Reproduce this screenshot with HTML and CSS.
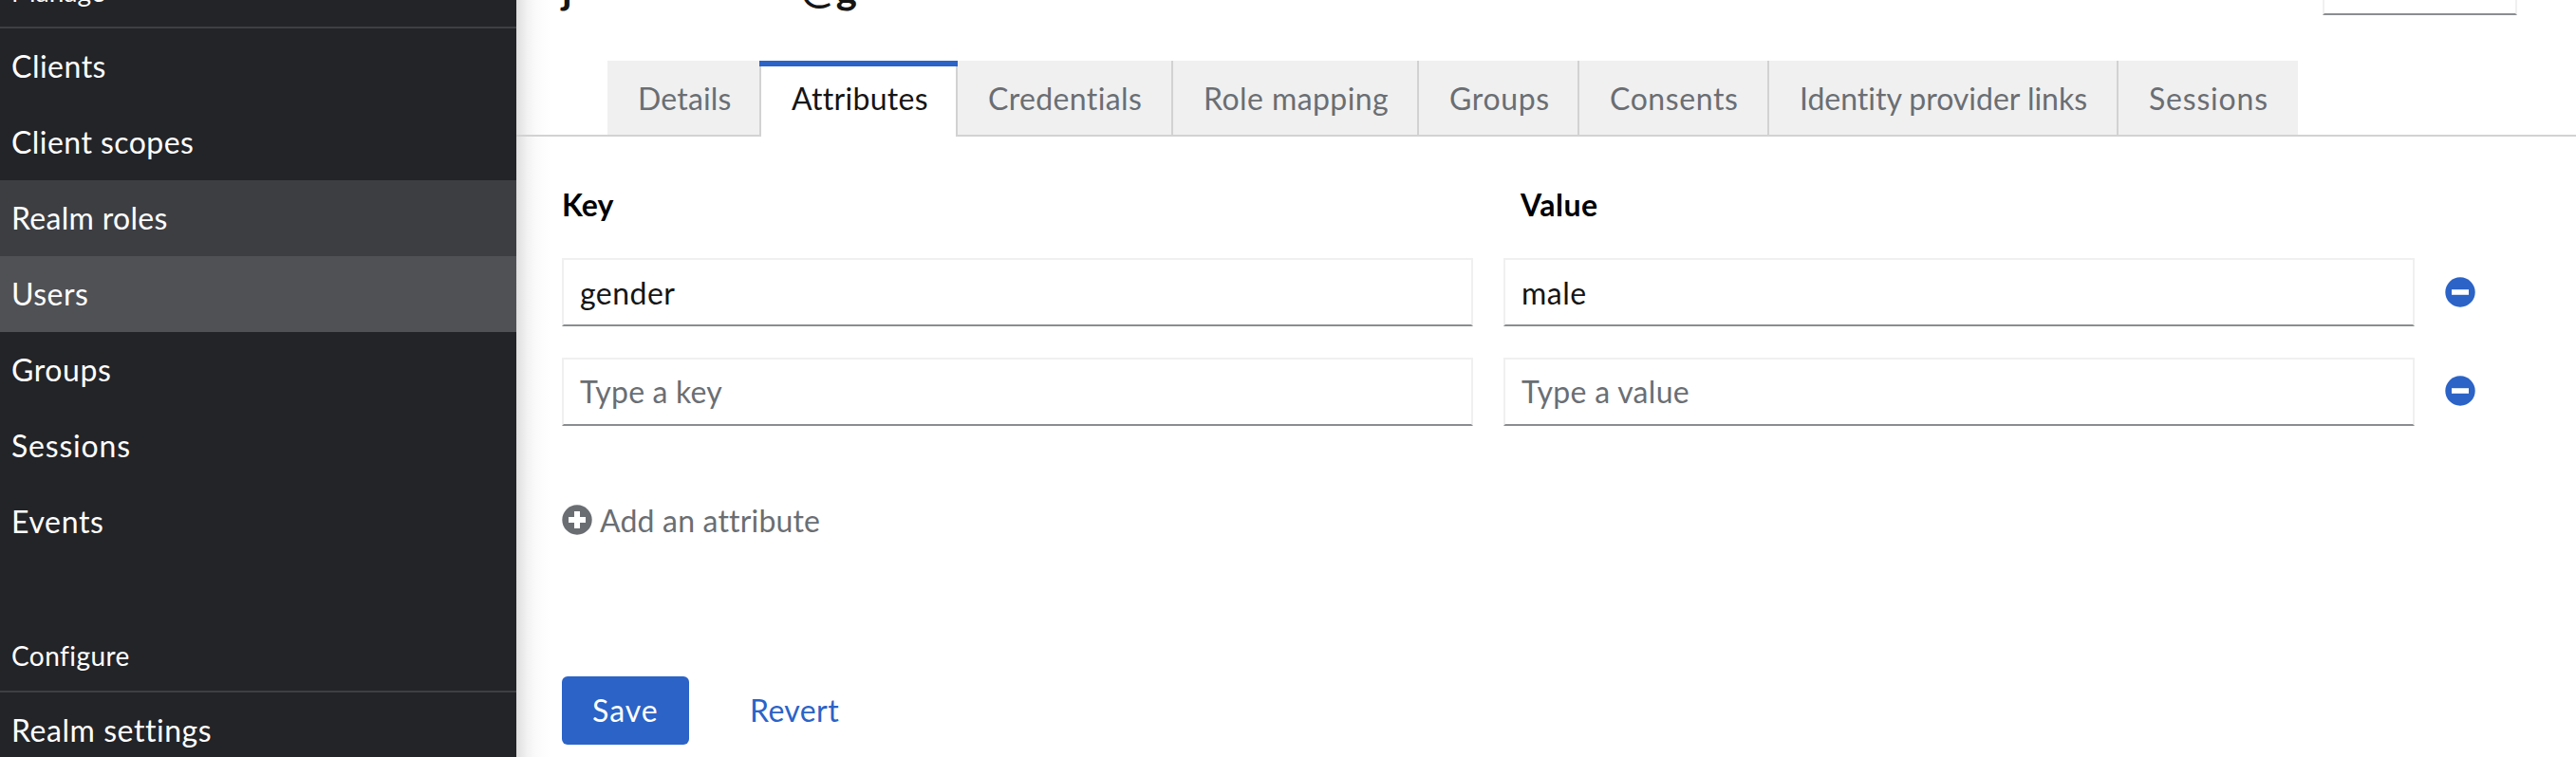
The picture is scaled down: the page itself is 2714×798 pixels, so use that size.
FILE: index.html
```html
<!DOCTYPE html>
<html lang="en">
<head>
<meta charset="utf-8">
<title>User details</title>
<link rel="stylesheet" href="styles.css">
</head>
<body>
<div class="page">
  <aside class="sidebar">
    <h2 class="nav-title nav-title-top t-manage">Manage</h2>
    <nav class="nav-list">
      <a class="nav-item t-clients">Clients</a>
      <a class="nav-item t-scopes">Client scopes</a>
      <a class="nav-item nav-hover t-roles">Realm roles</a>
      <a class="nav-item nav-current t-users">Users</a>
      <a class="nav-item t-groups">Groups</a>
      <a class="nav-item t-sessions">Sessions</a>
      <a class="nav-item t-events">Events</a>
    </nav>
    <h2 class="nav-title nav-title-configure t-configure">Configure</h2>
    <nav class="nav-list">
      <a class="nav-item t-settings">Realm settings</a>
    </nav>
  </aside>
  <main class="main">
    <header class="header">
      <h1 class="username"><span>j</span><span class="domain">@g</span></h1>
      <div class="action-select"></div>
    </header>
    <div class="tabs">
      <button class="tab tab-details">Details</button>
      <button class="tab tab-attributes tab-active">Attributes</button>
      <button class="tab tab-credentials">Credentials</button>
      <button class="tab tab-roles">Role mapping</button>
      <button class="tab tab-groups">Groups</button>
      <button class="tab tab-consents">Consents</button>
      <button class="tab tab-idp">Identity provider links</button>
      <button class="tab tab-sessions">Sessions</button>
    </div>
    <form class="form">
      <div class="labels">
        <span class="label-key">Key</span>
        <span class="label-value">Value</span>
      </div>
      <div class="row">
        <div class="field t-gender">gender</div>
        <div class="field t-male">male</div>
        <svg class="icon" viewBox="0 0 32 32"><circle cx="16" cy="16" r="15.7"/><path class="mark" d="M7 13.2h18v5.6H7z"/></svg>
      </div>
      <div class="row">
        <div class="field placeholder t-typekey">Type a key</div>
        <div class="field placeholder t-typevalue">Type a value</div>
        <svg class="icon icon-second" viewBox="0 0 32 32"><circle cx="16" cy="16" r="15.7"/><path class="mark" d="M7 13.2h18v5.6H7z"/></svg>
      </div>
      <div class="add">
        <svg class="icon" viewBox="0 0 32 32"><circle cx="16" cy="16" r="15.7"/><path class="mark" d="M13 7h6v6h6v6h-6v6h-6v-6H7v-6h6z"/></svg>
        <span class="t-add">Add an attribute</span>
      </div>
      <div class="actions">
        <span class="save">Save</span>
        <span class="revert">Revert</span>
      </div>
    </form>
  </main>
</div>
</body>
</html>
```
FILE: styles.css
```css
* { box-sizing: border-box; }
body { margin: 0; background: #fff; font: 32px/1.5 Lato, sans-serif; font-variant-ligatures: none; color: #151515; }
.page { display: flex; width: 100%; height: 798px; overflow: hidden; }

.sidebar { width: 544px; height: 798px; flex: none; overflow: hidden; background: #232428; color: #fff; }
.nav-title { margin: 0; padding-left: 12px; font-size: 28px; font-weight: 400; border-bottom: 2px solid #3e3f43; }
.nav-title-top { height: 30px; line-height: 42px; display: flex; align-items: flex-end; padding-bottom: 16px; }
.nav-title-configure { height: 140px; line-height: 42px; padding-top: 80px; }
.nav-list { display: flex; flex-direction: column; }
.nav-item { height: 80px; line-height: 80px; padding-left: 12px; }
.nav-hover { background: #3d3e42; }
.nav-current { background: #505155; }

.main { flex: 1; min-width: 0; background: linear-gradient(90deg, #dedede 0, #e9e9e9 6px, #f3f3f3 12px, #fafafa 20px, #fdfdfd 28px, #fff 36px); }
.header { height: 64px; padding: 0 62px 0 48px; display: flex; justify-content: space-between; align-items: flex-start; }
.username { display: flex; width: 313px; height: 16px; margin: 0; justify-content: space-between; align-items: flex-end; padding-bottom: 6px; font-size: 42px; line-height: 44px; font-weight: 700; }
.domain { letter-spacing: 2px; }
.action-select { width: 205px; height: 16px; border: solid #f0f0f0; border-width: 0 2px 2px; border-bottom-color: #8a8d90; }

.tabs { display: flex; height: 80px; padding-left: 96px; border-bottom: 2px solid #d2d2d2; }
.tab { height: 78px; flex: none; padding: 1px 0 0 32px; border: 0 solid #d2d2d2; border-right-width: 2px; background: #f0f0f0; color: #6a6e73; font: 32px/77px Lato, sans-serif; font-variant-ligatures: none; text-align: left; white-space: nowrap; }
.tab-details { width: 162px; height: 80px; border-bottom-width: 2px; letter-spacing: .17px; }
.tab-active { position: relative; height: 80px; background: #fff; color: #151515; padding-bottom: 2px; }
.tab-active::before { content: ""; position: absolute; top: 0; left: -2px; right: -2px; height: 6px; background: #2b63c7; }
.tab-attributes { width: 207px; letter-spacing: .3px; }
.tab-credentials { width: 227px; letter-spacing: .37px; }
.tab-roles { width: 259px; letter-spacing: .42px; }
.tab-groups { width: 169px; letter-spacing: .65px; }
.tab-consents { width: 200px; letter-spacing: .58px; }
.tab-idp { width: 368px; letter-spacing: -.02px; }
.tab-sessions { width: 189px; border-right: 0; letter-spacing: .81px; }

.form { padding: 48px 0 0 48px; }
.labels { display: grid; grid-template-columns: 1010px 1fr; height: 80px; line-height: 47px; font-weight: 700; color: #000; }
.label-value { letter-spacing: .5px; }
.row { display: grid; grid-template-columns: 960px 960px 32px; gap: 32px; height: 72px; margin-bottom: 33px; }
.field { height: 72px; border: 2px solid #f0f0f0; border-bottom-color: #8a8d90; padding-left: 17px; line-height: 69px; background: #fff; }
.placeholder { color: #6a6e73; line-height: 67px; }
.icon { display: block; width: 32px; height: 32px; margin-top: 20px; fill: #2b63c7; }
.icon-second { margin-top: 19px; }
.icon .mark { fill: #fff; }

.add { display: flex; height: 48px; margin-top: 75px; line-height: 49px; color: #6a6e73; }
.add .icon { margin: 8px 8px 0 0; fill: #6a6e73; }
.actions { display: flex; margin-top: 141px; height: 72px; line-height: 71px; }
.save { width: 134px; padding-left: 32px; border-radius: 6px; background: #2b63c7; color: #fff; letter-spacing: 1px; }
.revert { padding-left: 64px; color: #2b63c7; letter-spacing: .4px; }

/* per-string tracking */
.t-manage { letter-spacing: .13px; }
.t-clients { letter-spacing: .5px; }
.t-scopes { letter-spacing: .45px; }
.t-roles { letter-spacing: .3px; }
.t-users { letter-spacing: .48px; }
.t-groups { letter-spacing: .6px; }
.t-sessions { letter-spacing: .81px; }
.t-events { letter-spacing: .65px; }
.t-settings { letter-spacing: .55px; }
.t-configure { letter-spacing: .44px; }
.t-gender { letter-spacing: .47px; }
.t-male { letter-spacing: .5px; }
.t-typekey { letter-spacing: .19px; }
.t-typevalue { letter-spacing: .31px; }
.t-add { letter-spacing: .18px; }
```
